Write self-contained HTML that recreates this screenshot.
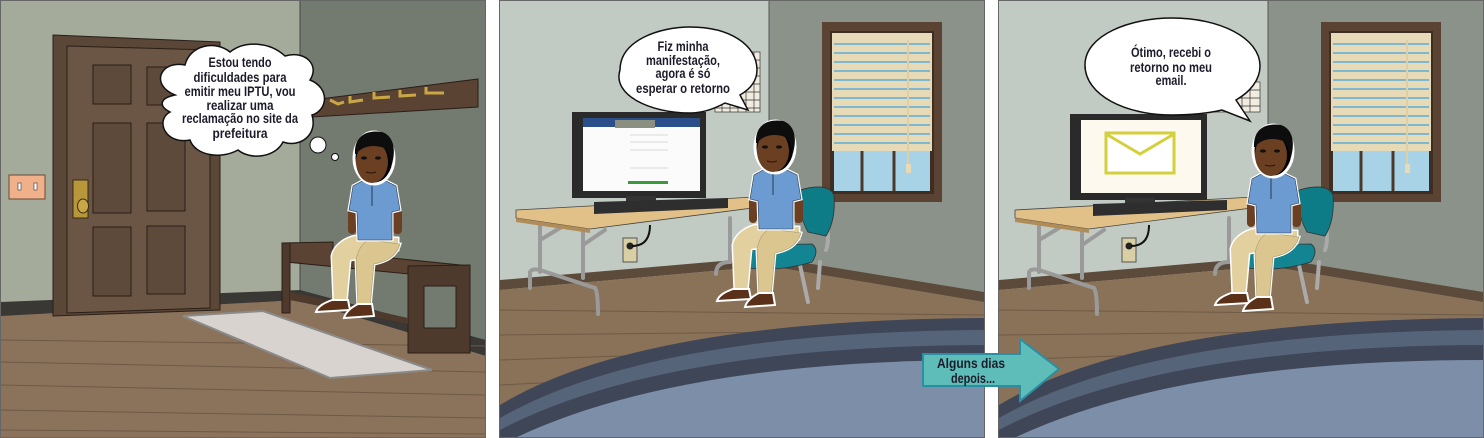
<!DOCTYPE html>
<html><head><meta charset="utf-8"><style>
html,body{margin:0;padding:0;background:#fff;}
svg{display:block;}
text{font-family:"Liberation Sans Narrow","Liberation Sans",sans-serif;font-weight:bold;fill:#1b1b2b;text-anchor:middle;}
</style></head><body>
<svg width="1484" height="438" viewBox="0 0 1484 438" xmlns="http://www.w3.org/2000/svg">
<defs>
<clipPath id="c1"><rect x="1" y="1" width="484" height="436"/></clipPath>
<clipPath id="c2"><rect x="500" y="1" width="484" height="436"/></clipPath>
<clipPath id="c3"><rect x="999" y="1" width="484" height="436"/></clipPath>
<g id="man">
 <path d="M-18,78 L24,80 L24,92 C10,96 -10,100 -24,102 L-28,146 L-40,146 L-42,98 C-40,88 -30,80 -18,78Z" fill="#e3d09f" stroke="#fff" stroke-width="3"/>
 <path d="M-5,82 L26,86 C22,100 10,104 0,106 L-4,150 L-16,150 L-18,102 C-16,92 -12,85 -5,82Z" fill="#dcc690" stroke="#fff" stroke-width="3"/>
 <path d="M-18,78 L24,80 L24,92 C10,96 -10,100 -24,102 L-28,146 L-40,146 L-42,98 C-40,88 -30,80 -18,78Z" fill="#e3d09f"/>
 <path d="M-5,82 L26,86 C22,100 10,104 0,106 L-4,150 L-16,150 L-18,102 C-16,92 -12,85 -5,82Z" fill="#dcc690" stroke="#a89a70" stroke-width="0.6"/>
 <path d="M-42,142 L-26,142 L-24,152 L-58,154 C-56,148 -50,145 -42,142Z" fill="#5a3019" stroke="#fff" stroke-width="2"/>
 <path d="M-16,146 L-2,146 L0,158 L-30,160 C-28,153 -22,149 -16,146Z" fill="#5a3019" stroke="#fff" stroke-width="2"/>
 <rect x="-26" y="50" width="8" height="26" rx="4" fill="#6b3f22"/>
 <rect x="19" y="50" width="9" height="26" rx="4" fill="#6b3f22"/>
 <path d="M-10,22 L10,22 L22,28 L26,52 L18,54 L18,82 L-16,82 L-17,54 L-25,52 L-21,28Z" fill="#6b9bd0" stroke="#fff" stroke-width="3"/>
 <path d="M-10,22 L10,22 L22,28 L26,52 L18,54 L18,82 L-16,82 L-17,54 L-25,52 L-21,28Z" fill="#6b9bd0" stroke="#2a3a55" stroke-width="0.6"/>
 <line x1="-2" y1="26" x2="-2" y2="48" stroke="#2a3a55" stroke-width="1"/>
 <path d="M-6,22 L0,28 L6,22" fill="#6b3f22"/>
 <ellipse cx="0" cy="0" rx="20" ry="26" fill="#000" stroke="#fff" stroke-width="3"/>
 <ellipse cx="-2" cy="4" rx="16" ry="21" fill="#6b3f22"/>
 <path d="M-19,-4 C-20,-24 -5,-28 8,-26 C20,-22 22,-8 18,6 C16,0 14,-8 10,-10 C0,-14 -12,-12 -18,-4Z" fill="#0d0d0d"/>
 <ellipse cx="-10" cy="0" rx="3" ry="1.6" fill="#111"/>
 <ellipse cx="4" cy="0" rx="3" ry="1.6" fill="#111"/>
 <path d="M-8,14 Q-3,16 2,14" stroke="#2a1208" stroke-width="1" fill="none"/>
</g>
<g id="room">
 <rect x="500" y="0" width="270" height="438" fill="#c1cbc3"/>
 <rect x="769" y="0" width="216" height="438" fill="#8a9289"/>
 <line x1="769" y1="0" x2="769" y2="260" stroke="#555" stroke-width="1"/>
 <polygon points="500,280 769,257 769,266 500,290" fill="#5c4a3a"/>
 <polygon points="769,257 984,292 984,302 769,266" fill="#5c4a3a"/>
 <polygon points="500,290 769,266 984,302 984,438 500,438" fill="#8a7259"/>
 <g stroke="#6f5a45" stroke-width="1">
  <line x1="500" y1="310" x2="984" y2="315"/><line x1="500" y1="335" x2="984" y2="330"/>
  <line x1="500" y1="360" x2="800" y2="350"/><line x1="500" y1="385" x2="700" y2="375"/>
 </g>
 <path d="M500,405 Q640,320 985,318 L985,438 L500,438Z" fill="#3e4658"/>
 <path d="M500,418 Q650,332 985,330 L985,438 L500,438Z" fill="#56647a"/>
 <path d="M500,430 Q660,346 985,345 L985,438 L500,438Z" fill="#3e4658"/>
 <path d="M515,438 Q680,360 985,360 L985,438Z" fill="#7c8ea8"/>
 <rect x="822" y="22" width="120" height="180" fill="#5a4333"/>
 <rect x="830" y="31" width="104" height="163" fill="#3e2e22"/>
 <rect x="834" y="150" width="96" height="41" fill="#a8d3e6"/>
 <g stroke="#4a3a2c" stroke-width="3"><line x1="862" y1="150" x2="862" y2="191"/><line x1="894" y1="150" x2="894" y2="191"/></g>
 <rect x="832" y="33" width="100" height="118" fill="#e6dab7"/>
 <g stroke="#7fb6d0" stroke-width="2">
  <line x1="834" y1="44" x2="930" y2="44"/><line x1="834" y1="53" x2="930" y2="53"/><line x1="834" y1="62" x2="930" y2="62"/><line x1="834" y1="71" x2="930" y2="71"/><line x1="834" y1="80" x2="930" y2="80"/><line x1="834" y1="89" x2="930" y2="89"/><line x1="834" y1="98" x2="930" y2="98"/><line x1="834" y1="107" x2="930" y2="107"/><line x1="834" y1="116" x2="930" y2="116"/><line x1="834" y1="125" x2="930" y2="125"/><line x1="834" y1="134" x2="930" y2="134"/><line x1="834" y1="143" x2="930" y2="143"/>
 </g>
 <line x1="908" y1="40" x2="908" y2="170" stroke="#ddd0a8" stroke-width="2"/>
 <rect x="906" y="164" width="5" height="9" fill="#e6dab7"/>
 <rect x="623" y="238" width="14" height="24" fill="#d8cfa5" stroke="#555"/>
 <circle cx="630" cy="246" r="3.5" fill="#222"/>
 <path d="M632,246 Q650,246 650,225" stroke="#111" stroke-width="2" fill="none"/>
 <g stroke="#9a9a9a" stroke-width="4" fill="none" stroke-linecap="round">
  <path d="M540,226 L540,272 M583,230 L583,278 M730,218 L730,262 M540,240 L560,228 M583,245 L605,230"/>
  <path d="M530,288 L530,272 Q532,268 540,270 L595,288 Q598,292 598,314"/>
  <path d="M716,274 Q716,262 730,262"/>
 </g>
 <polygon points="516,210 755,197 760,207 590,229 516,218" fill="#e2c188" stroke="#444" stroke-width="0.8"/>
 <polygon points="516,218 590,229 590,233 516,222" fill="#b08c58"/>
 <g stroke="#aaa" stroke-width="4" fill="none" stroke-linecap="round">
  <path d="M770,262 L770,292 M800,265 L808,302 M820,262 L818,288 M826,250 Q830,240 826,220"/>
 </g>
 <path d="M800,190 Q828,182 834,195 Q836,220 826,236 L808,232 Q796,210 800,190Z" fill="#0e7c87" stroke="#333" stroke-width="0.8"/>
 <path d="M742,255 Q760,244 812,244 Q820,250 812,262 Q780,272 748,268Z" fill="#138592" stroke="#333" stroke-width="0.8"/>
</g>
</defs>

<rect width="1484" height="438" fill="#fff"/>

<g clip-path="url(#c1)">
 <rect x="0" y="0" width="301" height="438" fill="#a4ab9b"/>
 <rect x="300" y="0" width="186" height="438" fill="#737b70"/>
 <line x1="300" y1="0" x2="300" y2="298" stroke="#444" stroke-width="1"/>
 <polygon points="0,302 300,290 300,300 0,318" fill="#3a3835"/>
 <polygon points="300,290 486,340 486,356 300,300" fill="#3a3835"/>
 <polygon points="0,316 300,300 486,356 486,438 0,438" fill="#8b735b"/>
 <g stroke="#6d5946" stroke-width="1">
  <line x1="0" y1="340" x2="486" y2="346"/><line x1="0" y1="362" x2="486" y2="372"/><line x1="0" y1="385" x2="486" y2="395"/><line x1="0" y1="410" x2="486" y2="418"/><line x1="0" y1="430" x2="486" y2="434"/>
 </g>
 <polygon points="53,35 220,42 220,310 53,316" fill="#5b4738" stroke="#2a1f18"/>
 <polygon points="67,46 210,50 210,308 67,313" fill="#6b5545" stroke="#2a1f18"/>
 <g fill="#5e4a3b" stroke="#2a1f18">
  <rect x="93" y="65" width="38" height="39"/><rect x="147" y="67" width="38" height="38"/>
  <rect x="93" y="123" width="38" height="90"/><rect x="147" y="123" width="38" height="88"/>
  <rect x="93" y="227" width="38" height="69"/><rect x="147" y="226" width="38" height="68"/>
 </g>
 <rect x="73" y="180" width="15" height="38" fill="#b8973a" stroke="#3a2d10"/>
 <ellipse cx="83" cy="206" rx="5.5" ry="7" fill="#c9a646" stroke="#3a2d10"/>
 <rect x="9" y="175" width="36" height="24" fill="#f0b08a" stroke="#6a4a3a"/>
 <rect x="18" y="183" width="3" height="7" fill="#fff" stroke="#333" stroke-width="0.6"/>
 <rect x="34" y="183" width="3" height="7" fill="#fff" stroke="#333" stroke-width="0.6"/>
 <polygon points="312,100 478,79 478,107 312,117" fill="#5a4333" stroke="#2a1f18"/>
 <g stroke="#c9a646" stroke-width="3" fill="none">
  <path d="M330,100 L338,104 L344,102"/><path d="M350,96 L350,102 L363,100"/><path d="M374,92 L374,98 L390,97"/><path d="M400,90 L400,96 L416,95"/><path d="M426,87 L426,93 L444,93"/>
 </g>
 <polygon points="183,316 263,311 432,370 330,378" fill="#d9d3cf" stroke="#8a8a8a" stroke-width="2"/>
 <polygon points="282,243 333,242 333,252 470,266 470,280 286,262" fill="#5a4333" stroke="#2a1f18"/>
 <rect x="282" y="243" width="8" height="70" fill="#4e3a2c" stroke="#2a1f18"/>
 <polygon points="408,266 470,265 470,353 408,353" fill="#4e3a2c" stroke="#2a1f18"/>
 <rect x="424" y="286" width="32" height="42" fill="#737b70" stroke="#2a1f18"/>
 <polygon points="290,292 408,318 408,324 290,300" fill="#4e3a2c"/>
 <use href="#man" x="374" y="158"/>
 <path d="M175,95 C150,85 160,60 185,65 C190,45 215,40 230,52 C245,40 270,42 285,56 C305,50 320,65 310,80 C330,88 328,110 312,115 C318,135 300,148 283,142 C275,158 250,160 238,150 C220,160 195,155 190,140 C165,145 155,120 170,112 C158,106 160,98 175,95Z" fill="#fff" stroke="#111" stroke-width="1.5"/>
 <circle cx="318" cy="145" r="8" fill="#fff" stroke="#111"/>
 <circle cx="335" cy="157" r="3.5" fill="#fff" stroke="#111"/>
 <g font-size="14">
  <text x="240" y="67" textLength="63" lengthAdjust="spacingAndGlyphs">Estou tendo</text>
  <text x="240" y="82" textLength="93" lengthAdjust="spacingAndGlyphs">dificuldades para</text>
  <text x="240" y="96" textLength="111" lengthAdjust="spacingAndGlyphs">emitir meu IPTU, vou</text>
  <text x="240" y="110" textLength="67" lengthAdjust="spacingAndGlyphs">realizar uma</text>
  <text x="240" y="123" textLength="116" lengthAdjust="spacingAndGlyphs">reclamação no site da</text>
  <text x="240" y="138" textLength="55" lengthAdjust="spacingAndGlyphs">prefeitura</text>
 </g>
</g>
<rect x="0.5" y="0.5" width="485" height="437" fill="none" stroke="#666"/>

<g clip-path="url(#c2)">
 <use href="#room"/>
 <rect x="572" y="112" width="134" height="86" fill="#2a2a2a"/>
 <rect x="583" y="118" width="117" height="73" fill="#fbfbfb"/>
 <rect x="583" y="118" width="117" height="9" fill="#2b4f8a"/>
 <rect x="615" y="120" width="40" height="8" fill="#8a8f80"/>
 <rect x="628" y="181" width="40" height="3" fill="#3a9a3a"/>
 <g stroke="#ccc" stroke-width="0.8"><line x1="630" y1="135" x2="668" y2="135"/><line x1="630" y1="142" x2="668" y2="142"/><line x1="630" y1="150" x2="668" y2="150"/><line x1="630" y1="168" x2="668" y2="168"/></g>
 <rect x="626" y="196" width="30" height="6" fill="#333"/>
 <polygon points="594,202 728,198 728,208 594,214" fill="#2e2e2e"/>
 <use href="#man" x="775" y="147"/>
 <g stroke="#333" stroke-width="0.7"><rect x="715" y="52" width="45" height="60" fill="#f2ece0"/>
  <path d="M715,60H760M715,68H760M715,76H760M715,84H760M715,92H760M715,100H760M715,108H760M722,52V112M730,52V112M738,52V112M746,52V112M754,52V112"/></g>
 <path d="M620,70 C620,40 660,27 690,27 C730,27 757,45 757,70 C757,80 752,88 740,95 L748,110 L725,103 C712,110 700,113 690,113 C650,113 612,95 620,70Z" fill="#fff" stroke="#111" stroke-width="1.5"/>
 <g font-size="14">
  <text x="683" y="51" textLength="51" lengthAdjust="spacingAndGlyphs">Fiz minha</text>
  <text x="683" y="65" textLength="74" lengthAdjust="spacingAndGlyphs">manifestação,</text>
  <text x="683" y="78" textLength="55" lengthAdjust="spacingAndGlyphs">agora é só</text>
  <text x="683" y="93" textLength="94" lengthAdjust="spacingAndGlyphs">esperar o retorno</text>
 </g>
</g>
<rect x="499.5" y="0.5" width="485" height="437" fill="none" stroke="#666"/>

<g clip-path="url(#c3)">
 <use href="#room" x="499"/>
 <rect x="1070" y="114" width="137" height="86" fill="#2a2a2a"/>
 <rect x="1081" y="120" width="120" height="73" fill="#fdf9ef"/>
 <rect x="1106" y="133" width="68" height="40" fill="#fff" stroke="#d4cf3c" stroke-width="3"/>
 <path d="M1106,134 L1140,154 L1174,134" fill="none" stroke="#d4cf3c" stroke-width="3"/>
 <rect x="1125" y="198" width="30" height="6" fill="#333"/>
 <polygon points="1093,204 1227,200 1227,210 1093,216" fill="#2e2e2e"/>
 <use href="#man" x="1273" y="151"/>
 <g stroke="#333" stroke-width="0.7"><rect x="1210" y="82" width="50" height="30" fill="#f2ece0"/>
  <path d="M1210,90H1260M1210,98H1260M1210,106H1260M1218,82V112M1226,82V112M1234,82V112M1242,82V112M1250,82V112"/></g>
 <path d="M1085,65 C1085,35 1130,18 1172,18 C1220,18 1260,38 1260,66 C1260,80 1250,92 1236,100 L1250,121 L1222,110 C1205,114 1190,115 1172,115 C1125,115 1085,95 1085,65Z" fill="#fff" stroke="#111" stroke-width="1.5"/>
 <g font-size="14">
  <text x="1171" y="57" textLength="80" lengthAdjust="spacingAndGlyphs">Ótimo, recebi o</text>
  <text x="1171" y="72" textLength="82" lengthAdjust="spacingAndGlyphs">retorno no meu</text>
  <text x="1171" y="85" textLength="31" lengthAdjust="spacingAndGlyphs">email.</text>
 </g>
</g>
<rect x="998.5" y="0.5" width="485" height="437" fill="none" stroke="#666"/>

<path d="M923,354 L1020,354 L1020,339 L1059,369 L1020,401 L1020,386 L923,386Z" fill="#5fbdb9" stroke="#2a8fa2" stroke-width="2"/>
<g font-size="14">
 <text x="971" y="368" textLength="68" lengthAdjust="spacingAndGlyphs">Alguns dias</text>
 <text x="973" y="383" textLength="44" lengthAdjust="spacingAndGlyphs">depois...</text>
</g>
</svg>
</body></html>
